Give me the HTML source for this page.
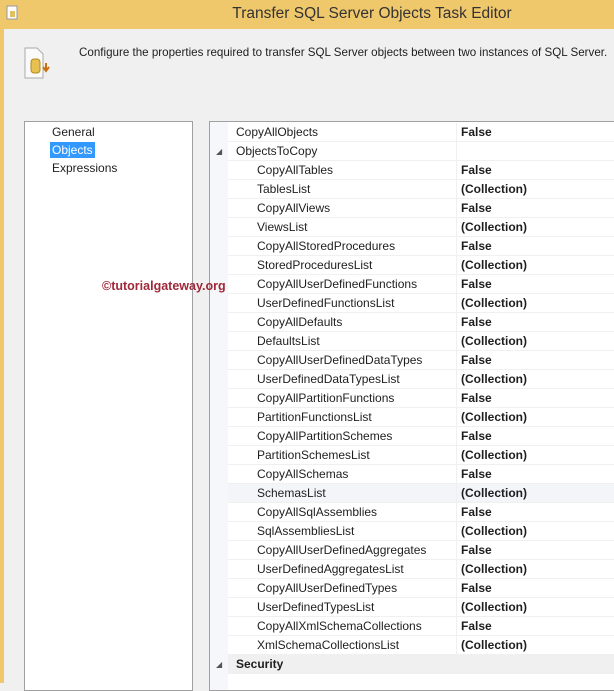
<!DOCTYPE html>
<html><head><style>
*{margin:0;padding:0;box-sizing:border-box}
body{width:614px;height:683px;overflow:hidden;background:#f0f0f0;font-family:"Liberation Sans",sans-serif;font-size:12px;color:#1e1e1e;position:relative}
.title{position:absolute;left:0;top:0;width:614px;height:29px;background:#f0c86c;text-align:center;font-size:15.5px;line-height:28px;color:#333;padding-left:130px}
.lb{position:absolute;left:0;top:29px;width:4px;height:654px;background:#f0c86c}
.desc{position:absolute;left:79px;top:46px;font-size:11.6px;white-space:nowrap}
.left{position:absolute;left:24px;top:121px;width:169px;height:570px;background:#fff;border:1px solid #a0a0a0}
.left div{position:absolute;left:25px;font-size:12px;line-height:16px;padding:0 2px}
.grid{position:absolute;left:209px;top:121px;width:410px;height:570px;background:#fff;border:1px solid #a0a0a0}
.gut{position:absolute;left:0;top:0;width:18px;height:100%;background:#f5f7fa}
.row{position:absolute;left:18px;width:400px;height:19px;border-bottom:1px solid #f0f0f0;line-height:19px}
.row .n{position:absolute;left:8px}
.row .v{position:absolute;left:233px;font-weight:bold}
.row.i .n{left:29px}
.row .sep{position:absolute;left:228px;top:0;width:1px;height:19px;background:#f0f0f0}
.tri{position:absolute;left:-12px;top:0;font-size:8px;color:#555}
</style></head><body>
<div class="title">Transfer SQL Server Objects Task Editor</div>
<div class="lb"></div>
<svg style="position:absolute;left:5px;top:5px" width="16" height="16"><rect x="2" y="1" width="10" height="13" fill="#fff" stroke="#999"/><rect x="5" y="6" width="5" height="6" fill="#e0c060"/></svg>
<svg style="position:absolute;left:22px;top:47px" width="36" height="32"><path d="M3 1h12l6 6v24H3z" fill="#fafafa" stroke="#aaa"/><rect x="9" y="12" width="9" height="14" rx="3" fill="#e8c050" stroke="#b08a20"/><path d="M24 16v7M21 20l3 4 3-4" stroke="#c87010" stroke-width="2" fill="none"/></svg>
<div class="desc">Configure the properties required to transfer SQL Server objects between two instances of SQL Server.</div>
<div class="left">
<div style="top:2px">General</div>
<div style="top:20px;background:#3399ff;color:#fff">Objects</div>
<div style="top:38px">Expressions</div>
</div>
<div class="grid"><div class="gut"></div>
<div class="row" style="top:1px"><span class="n">CopyAllObjects</span><span class="sep"></span><span class="v">False</span></div>
<div class="row" style="top:20px"><span class="tri">◢</span><span class="n">ObjectsToCopy</span><span class="sep"></span></div>
<div id="rows"></div>
<div class="row" style="top:533px;background:#f0f0f0"><span class="tri">◢</span><span class="n" style="font-weight:bold">Security</span></div>
</div>
<div style="position:absolute;left:102px;top:279px;font-weight:bold;color:#a0283a;font-size:12.5px;z-index:5">©tutorialgateway.org</div>
<script>
var r=["CopyAllTables","TablesList","CopyAllViews","ViewsList","CopyAllStoredProcedures","StoredProceduresList","CopyAllUserDefinedFunctions","UserDefinedFunctionsList","CopyAllDefaults","DefaultsList","CopyAllUserDefinedDataTypes","UserDefinedDataTypesList","CopyAllPartitionFunctions","PartitionFunctionsList","CopyAllPartitionSchemes","PartitionSchemesList","CopyAllSchemas","SchemasList","CopyAllSqlAssemblies","SqlAssembliesList","CopyAllUserDefinedAggregates","UserDefinedAggregatesList","CopyAllUserDefinedTypes","UserDefinedTypesList","CopyAllXmlSchemaCollections","XmlSchemaCollectionsList"];
var h="";r.forEach(function(n,k){h+='<div class="row i" style="top:'+(39+k*19)+'px'+(n=="SchemasList"?';background:#f3f5f9':'')+'"><span class="n">'+n+'</span><span class="sep"></span><span class="v">'+(k%2?'(Collection)':'False')+'</span></div>'});
document.getElementById("rows").outerHTML=h;
</script>
</body></html>
